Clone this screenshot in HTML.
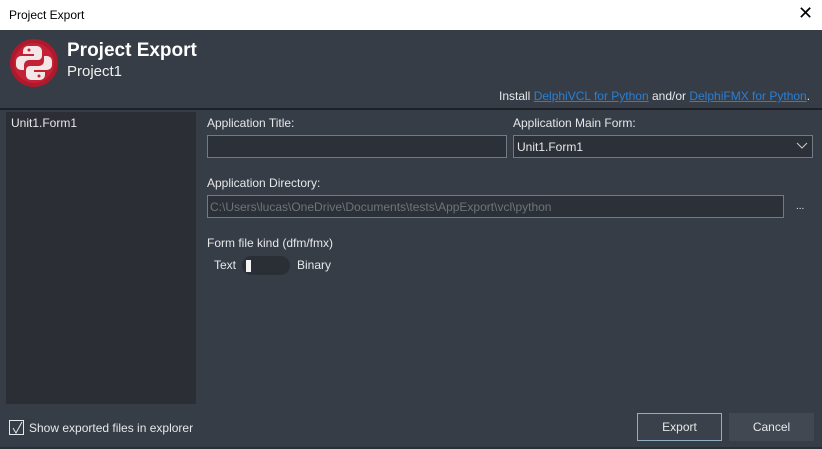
<!DOCTYPE html>
<html><head><style>
*{box-sizing:border-box;margin:0;padding:0}
body{width:822px;height:449px;overflow:hidden;background:#363d47;font-family:"Liberation Sans",sans-serif;font-size:12px;color:#e6e8ea;position:relative}
.abs{position:absolute}
.tb{left:0;top:0;width:822px;height:30px;background:#fff;color:#000;font-size:12px}
.inp{background:#2c3038;border:1px solid #737a82}
a{color:#2a7fd4;text-decoration:underline}
</style></head><body>
<div class="abs tb"><span class="abs" style="left:9px;top:8px">Project Export</span>
<span class="abs" style="left:798px;top:3px;font-size:18px">✕</span></div>
<svg class="abs" style="left:9px;top:38px" width="50" height="50" viewBox="0 0 50 50">
<circle cx="25" cy="25" r="24" fill="#b0182c"/><circle cx="25" cy="25" r="20" fill="#c42036"/>
<path d="M25 8h-6a5 5 0 0 0-5 5v3h11v2H12a5 5 0 0 0-5 5v4a5 5 0 0 0 5 5h3v-5a5 5 0 0 1 5-5h9a4 4 0 0 0 4-4v-5a5 5 0 0 0-5-5z" fill="#f3e6e6"/>
<path d="M25 42h6a5 5 0 0 0 5-5v-3H25v-2h13a5 5 0 0 0 5-5v-4a5 5 0 0 0-5-5h-3v5a5 5 0 0 1-5 5h-9a4 4 0 0 0-4 4v5a5 5 0 0 0 5 5z" fill="#f3e6e6"/>
<circle cx="20" cy="12" r="1.5" fill="#c42036"/><circle cx="30" cy="38" r="1.5" fill="#c42036"/></svg>
<div class="abs" style="left:67px;top:40px;font-size:19px;font-weight:bold;color:#fff">Project Export</div>
<div class="abs" style="left:67px;top:63px;font-size:15px;color:#f0f0f0">Project1</div>
<div class="abs" style="left:499px;top:89px">Install <a>DelphiVCL for Python</a> and/or <a>DelphiFMX for Python</a>.</div>
<div class="abs" style="left:0;top:108px;width:822px;height:2px;background:#1e2228"></div>
<div class="abs" style="left:6px;top:112px;width:190px;height:292px;background:#2b2e34"></div>
<div class="abs" style="left:11px;top:116px">Unit1.Form1</div>
<div class="abs" style="left:207px;top:116px">Application Title:</div>
<div class="abs inp" style="left:207px;top:135px;width:300px;height:23px"></div>
<div class="abs" style="left:513px;top:116px">Application Main Form:</div>
<div class="abs inp" style="left:513px;top:135px;width:300px;height:23px"><span class="abs" style="left:3px;top:4px">Unit1.Form1</span>
<svg class="abs" style="right:4px;top:6px" width="12" height="8"><path d="M1 1l5 5 5-5" stroke="#ccc" fill="none"/></svg></div>
<div class="abs" style="left:207px;top:176px">Application Directory:</div>
<div class="abs inp" style="left:207px;top:195px;width:577px;height:23px;color:#6e747b"><span class="abs" style="left:2px;top:4px">C:\Users\lucas\OneDrive\Documents\tests\AppExport\vcl\python</span></div>
<div class="abs" style="left:796px;top:201px;font-size:10px">...</div>
<div class="abs" style="left:207px;top:236px">Form file kind (dfm/fmx)</div>
<div class="abs" style="left:214px;top:258px">Text</div>
<div class="abs" style="left:242px;top:256px;width:48px;height:19px;border-radius:10px;background:#2a2f36"></div>
<div class="abs" style="left:246px;top:260px;width:5px;height:12px;background:#f4f4f4"></div>
<div class="abs" style="left:297px;top:258px">Binary</div>
<div class="abs" style="left:9px;top:420px;width:15px;height:15px;border:1px solid #e6e8ea"></div>
<svg class="abs" style="left:10px;top:421px" width="14" height="14"><path d="M3 7l3 5 6-11" stroke="#e6e8ea" fill="none"/></svg>
<div class="abs" style="left:29px;top:421px">Show exported files in explorer</div>
<div class="abs" style="left:637px;top:413px;width:85px;height:28px;border:1px solid #8fb0c4;background:#3a414b;text-align:center;line-height:26px">Export</div>
<div class="abs" style="left:729px;top:413px;width:85px;height:28px;background:#414852;text-align:center;line-height:28px">Cancel</div>
<div class="abs" style="left:0;top:447px;width:822px;height:2px;background:#2a2e35"></div>
</body></html>
